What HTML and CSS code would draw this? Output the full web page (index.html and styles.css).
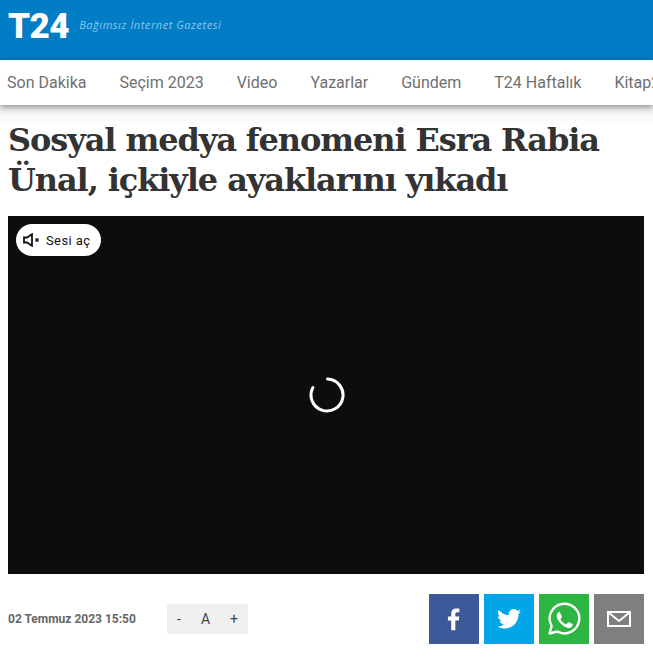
FILE: index.html
```html
<!DOCTYPE html>
<html lang="tr">

<head>
    <meta charset="UTF-8">
    <title>Sosyal medya fenomeni Esra Rabia Ünal, içkiyle ayaklarını yıkadı</title>
    <link rel="stylesheet" href="styles.css">
</head>

<body>
    <!-- Top bar -->
    <header class="topbar">
        <span class="logo">T24</span>
        <span class="slogan">Bağımsız İnternet Gazetesi</span>
    </header>

    <!-- Menu -->
    <nav class="menu">
        <a href="#">Son Dakika</a>
        <a href="#">Seçim 2023</a>
        <a href="#">Video</a>
        <a href="#">Yazarlar</a>
        <a href="#">Gündem</a>
        <a href="#">T24 Haftalık</a>
        <a href="#">Kitap24</a>
    </nav>

    <main class="article">
        <h1>Sosyal medya fenomeni Esra Rabia Ünal, içkiyle ayaklarını yıkadı</h1>

        <!-- Video -->
        <div class="video">
            <button class="unmute">
                <svg width="18" height="14" viewBox="0 0 18 14" fill="none" stroke="#111" stroke-width="1.8">
                    <path d="M1 4.500h3L9 1.200v11.600L4 9.500H1z"/>
                    <path d="M12.500 5.500l3 3M15.500 5.500l-3 3" stroke-width="1.500"/>
                </svg>
                Sesi aç
            </button>
            <svg class="spinner" width="36" height="36" viewBox="0 0 36 36" fill="none" stroke="#fff" stroke-width="3" stroke-linecap="round">
                <path d="M18.500 2a16 16 0 1 1-14.600 8.500"/>
            </svg>
        </div>

        <!-- Date, font size and share -->
        <div class="meta">
            <time class="date">02 Temmuz 2023 15:50</time>
            <div class="font-size">
                <span class="smaller">-</span>
                <span class="reset">A</span>
                <span class="bigger">+</span>
            </div>
            <div class="share">
                <a class="facebook" href="#">
                    <svg width="15" height="24" viewBox="0 0 16 24" fill="#fff">
                        <path d="M4.500 24V13.600H1V9.400h3.500V6.500C4.500 2.700 6.800.800 10 .800c1.500 0 2.800.100 3.200.200v3.800h-2.200c-1.700 0-2.100.800-2.100 2v2.600h4.200l-.600 4.200H8.900V24z"/>
                    </svg>
                </a>
                <a class="twitter" href="#">
                    <svg width="24" height="20" viewBox="0 0 24 20" fill="#fff">
                        <path d="M24 2.400c-.900.400-1.800.700-2.800.800 1-.600 1.800-1.600 2.200-2.700-1 .600-2 1-3.100 1.200A4.900 4.900 0 0 0 11.900 6.200C7.800 6 4.200 4 1.700.900c-1.300 2.200-.700 5.100 1.500 6.600-.800 0-1.600-.200-2.200-.600 0 2.300 1.600 4.400 3.900 4.900-.700.200-1.500.200-2.200.100.600 2 2.400 3.400 4.600 3.400A9.900 9.900 0 0 1 0 17.300 14 14 0 0 0 7.500 19.500c9.100 0 14.300-7.700 14-14.600 1-.700 1.800-1.500 2.500-2.500z"/>
                    </svg>
                </a>
                <a class="whatsapp" href="#">
                    <svg width="34" height="34" viewBox="0 0 34 34" fill="none" stroke="#fff">
                        <path d="M2.500 31.500l2.100-7.600A14.800 14.800 0 1 1 10.300 29.500z" stroke-width="2.400" stroke-linejoin="round"/>
                        <path d="M12.500 9.300c-.500 0-1.300.200-2 1-.700.800-1.500 2-1.500 3.700 0 2.700 2 5.200 2.300 5.600.300.400 3.800 6 9.400 7.400 3 .800 4.700-.400 5.400-1.300.600-.900.800-2.200.600-2.500-.200-.400-3.700-2.100-4.200-2.200-.500-.200-.900 0-1.200.400l-1.300 1.600c-.300.300-.600.400-1.100.100-2.500-1.100-4.300-3-5.500-5.200-.200-.400 0-.700.200-1l1-1.200c.200-.400.300-.700.100-1.100l-1.800-4.100c-.200-.500-.500-.600-1-.600z" transform="translate(1.600 1.400) scale(.9)" fill="#fff" stroke="none"/>
                    </svg>
                </a>
                <a class="mail" href="#">
                    <svg width="24" height="16" viewBox="0 0 24 16" fill="none" stroke="#fff" stroke-width="2">
                        <path d="M1 1h22v14H1z"/>
                        <path d="M1.500 1.500L12 10l10.500-8.500"/>
                    </svg>
                </a>
            </div>
        </div>
    </main>
</body>

</html>
```

FILE: styles.css
```css
html {
    height: 100%;
}

body {
    margin: 0;
    background-color: #ffffff;
    color: #666666;
    font-family: Roboto, Arial, sans-serif;
    overflow: hidden;
}

/* Top bar */
.topbar {
    display: flex;
    align-items: flex-start;
    gap: 10px;
    height: 60px;
    padding: 8px 8px 0;
    box-sizing: border-box;
    background-color: #007dc4;
}

.logo {
    color: #ffffff;
    font-size: 35px;
    font-weight: 900;
    line-height: 38px;
    letter-spacing: -0.5px;
}

.slogan {
    margin-top: 9px;
    color: #8fc6ec;
    font-family: "Open Sans", sans-serif;
    font-size: 11px;
    font-style: italic;
    line-height: 15px;
    letter-spacing: 0.55px;
}

/* Menu */
.menu {
    position: relative;
    display: flex;
    gap: 33px;
    height: 45px;
    padding-left: 7px;
    overflow: hidden;
    white-space: nowrap;
    background-color: #ffffff;
    box-shadow: 0 2px 7px rgba(0, 0, 0, 0.45);
}

.menu a {
    color: #707070;
    font-size: 16px;
    line-height: 45px;
    text-decoration: none;
}

/* Article */
.article {
    padding: 0 9px 0 8px;
    background: linear-gradient(#f1f1f1, #ffffff 22px);
}

h1 {
    margin: 0;
    padding: 15px 0 16px;
    color: #333333;
    font-family: "DejaVu Serif", serif;
    font-size: 32px;
    font-weight: 700;
    line-height: 40px;
    letter-spacing: -1.1px;
}

/* Video */
.video {
    position: relative;
    display: flex;
    align-items: center;
    justify-content: center;
    height: 358px;
    background-color: #0d0d0d;
}

.spinner {
    margin-left: 2px;
}

.unmute {
    position: absolute;
    top: 8px;
    left: 8px;
    display: flex;
    align-items: center;
    gap: 5px;
    height: 32px;
    padding: 0 11px 0 7px;
    border: 0;
    border-radius: 16px;
    background-color: #ffffff;
    color: #111111;
    font-family: Roboto, Arial, sans-serif;
    font-size: 13px;
    letter-spacing: 0.4px;
}

/* Meta row */
.meta {
    display: flex;
    align-items: center;
    padding-top: 20px;
}

.date {
    width: 159px;
    font-size: 12px;
    font-weight: 700;
}

.font-size {
    display: flex;
    width: 81px;
    height: 30px;
    background-color: #f0f0f0;
    color: #444444;
    font-size: 14px;
    line-height: 30px;
    text-align: center;
}

.smaller {
    width: 24px;
}

.reset {
    width: 29px;
}

.bigger {
    width: 28px;
}

.share {
    display: flex;
    gap: 5px;
    margin-left: auto;
}

.share a {
    display: flex;
    align-items: center;
    justify-content: center;
    width: 50px;
    height: 50px;
}

.facebook {
    background-color: #3b5998;
}

.twitter {
    background-color: #00a6e8;
}

.whatsapp {
    background-color: #2db742;
}

.mail {
    background-color: #7f7f7f;
}
```
